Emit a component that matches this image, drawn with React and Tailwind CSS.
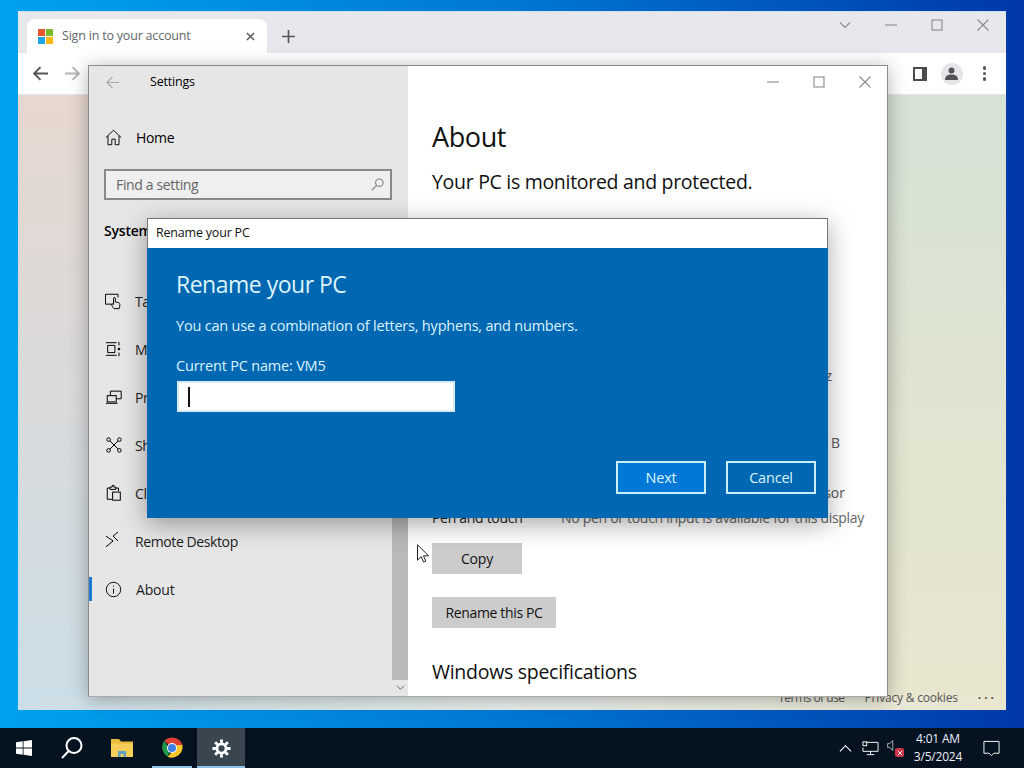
const Ic = ({ className = "", children, vb = "0 0 20 20" }) => (
  <svg viewBox={vb} fill="none" stroke="currentColor" strokeWidth="1.100" className={"shrink-0 " + className}>{children}</svg>
);

const NAV = [
  ["Tablet", <><path d="M8 13.500H.5V2.500H14.500V6" /><path d="M10 18.500C8.500 17 7.500 15 7.500 14c0-1 1.200-1 2-.2V7c0-1.400 2-1.400 2 0v4l3.500.8c1.200.3 1.500 1 1.500 2.200 0 1.500-.3 3-.8 4.500z" /></>],
  ["Multitasking", <><path d="M1 3h12M1 17h12M3 6h8v8H3z" /><path d="M15.500 2v4M15.500 14v4" /><circle cx="15.500" cy="10" r="1" fill="currentColor" /></>],
  ["Projecting to this PC", <><path d="M6 8V3.500h12V12h-5" /><rect x="2.500" y="8.500" width="10" height="7" /><path d="M1 17h13" /></>],
  ["Shared experiences", <><circle cx="4" cy="4" r="2" /><circle cx="16" cy="4" r="2" /><circle cx="4" cy="16" r="2" /><circle cx="16" cy="16" r="2" /><path d="M5.500 5.500l9 9M14.500 5.500l-9 9" /></>],
  ["Clipboard", <><path d="M8 17H2.500V4.500h3M12 4.500h3V8" /><path d="M5.500 6V3.500h2.500V1.500h2V3.500h2V6z" /><rect x="8.500" y="9" width="8.500" height="9" /></>],
  ["Remote Desktop", <><path d="M1 4.500l8 5.500-8 6.500M14.500 0L9 4.500l5.500 5.500" /></>],
];

function Controls({ chevron }) {
  return (
    <div className="flex items-center gap-[34px] text-[#8a8a8a]">
      {chevron && <Ic className="w-3 h-3" vb="0 0 12 12"><path d="M1 3.500l5 5 5-5" /></Ic>}
      <Ic className="w-3 h-3" vb="0 0 12 12"><path d="M0 6h12" /></Ic>
      <Ic className="w-3 h-3" vb="0 0 12 12"><rect x="1" y="1" width="10" height="10" /></Ic>
      <Ic className="w-3 h-3" vb="0 0 12 12"><path d="M.5.500l11 11M11.500.500l-11 11" /></Ic>
    </div>
  );
}

function Browser() {
  return (
    <div className="absolute left-[18px] top-[11px] w-[988px] h-[699px] flex flex-col bg-[#e7e8ec] border-t border-[#cfe0f0]">
      <div className="h-[41px] flex items-end pl-[9px] pr-[17px] relative shrink-0">
        <div className="w-[240px] h-[34px] bg-white rounded-t-lg flex items-center pl-[11px] pr-[12px]">
          <svg viewBox="0 0 16 16" className="w-[15px] h-[15px] shrink-0">
            <rect width="7.500" height="7.500" fill="#e8582a" />
            <rect x="8.500" width="7.500" height="7.500" fill="#7cb82a" />
            <rect y="8.500" width="7.500" height="7.500" fill="#1ea5e8" />
            <rect x="8.500" y="8.500" width="7.500" height="7.500" fill="#fcb812" />
          </svg>
          <span className="ml-[9px] text-[12.500px] text-[#62666a] tracking-[-0.2px] flex-1 truncate">Sign in to your account</span>
          <Ic className="w-[9px] h-[9px] text-[#555]" vb="0 0 10 10"><path strokeWidth="1.600" d="M1 1l8 8M9 1l-8 8" /></Ic>
        </div>
        <Ic className="w-[13px] h-[13px] ml-[15px] mb-[10px] text-[#555]" vb="0 0 12 12"><path strokeWidth="1.500" d="M6 0v12M0 6h12" /></Ic>
        <div className="ml-auto self-start mt-[7px]"><Controls chevron /></div>
      </div>
      <div className="h-[42px] bg-white flex items-center pl-[15px] pr-[15px] shrink-0 border-b border-[#e4e4e4]">
        <Ic className="w-[15px] h-[15px] text-[#555]" vb="0 0 14 14"><path strokeWidth="1.800" d="M14 7H1.500M7 1L1 7l6 6" /></Ic>
        <Ic className="w-[15px] h-[15px] ml-[17px] text-[#b4b4b4]" vb="0 0 14 14"><path strokeWidth="1.800" d="M0 7h12.500M7 1l6 6-6 6" /></Ic>
        <div className="ml-auto flex items-center">
          <div className="w-[14px] h-[14px] border-2 border-r-[5px] border-[#4c4c4c] bg-white" />
          <div className="w-[22px] h-[22px] ml-[14px] rounded-full bg-[#e3e5e8] flex items-center justify-center">
            <svg viewBox="0 0 12 12" className="w-[13px] h-[13px]" fill="#50545a"><circle cx="6" cy="3.200" r="2.700" /><path d="M0 12c0-3.500 2.500-5 6-5s6 1.500 6 5z" /></svg>
          </div>
          <div className="ml-[20px] mr-[5px] flex flex-col gap-[2px]">
            <div className="w-[3.500px] h-[3.500px] rounded-full bg-[#555]" />
            <div className="w-[3.500px] h-[3.500px] rounded-full bg-[#555]" />
            <div className="w-[3.500px] h-[3.500px] rounded-full bg-[#555]" />
          </div>
        </div>
      </div>
      <div className="flex-1 relative flex flex-col">
        <div className="flex-1 flex">
          <div className="w-1/2 bg-linear-to-b from-[#e6d7cf] to-[#cbdde6]" />
          <div className="w-1/2 bg-linear-to-b from-[#d5e2d5] via-[#dfe4d0] to-[#e9e6cf]" />
        </div>
        <div className="h-[13px] shrink-0 bg-linear-to-r from-[#cbdde6] via-[#e8efec] to-[#e9e6cf]" />
        <div className="absolute right-[9px] bottom-[3px] flex items-center text-[12px] text-[#555] tracking-[-0.2px]">
          <span className="tracking-[-0.5px]">Terms of use</span>
          <span className="ml-[20px]">Privacy &amp; cookies</span>
          <span className="ml-[20px] tracking-[3px] font-bold">···</span>
        </div>
      </div>
    </div>
  );
}

function Settings() {
  return (
    <div className="absolute left-[88px] top-[65px] w-[800px] h-[632px] flex border border-[#8c8c8c] border-b-[#aaa] bg-white shadow-[0_2px_18px_rgba(0,0,0,0.3)] overflow-hidden text-black">
      <div className="w-[319px] shrink-0 bg-[#e6e6e6] relative flex flex-col">
        <div className="h-[33px] shrink-0 flex items-center pl-[17px]">
          <Ic className="w-[13px] h-[13px] text-[#aaa]" vb="0 0 14 14"><path strokeWidth="1.300" d="M14 7H1M7 1L1 7l6 6" /></Ic>
          <span className="ml-[31px] text-[12.500px] tracking-[-0.2px]">Settings</span>
        </div>
        <div className="mt-[14px] h-12 shrink-0 flex items-center pl-[16px]">
          <Ic className="w-[17px] h-[17px]" vb="0 0 20 20"><path d="M1 10l9-8.500 9 8.500M3.500 8v10.500h4.500V12h4v6.500h4.500V8" /></Ic>
          <span className="ml-[14px] text-[14px] tracking-[-0.35px]">Home</span>
        </div>
        <div className="mt-2 mx-[15px] w-[288px] h-[31px] shrink-0 border-2 border-[#8a8a8a] bg-[#efefef] flex items-center pl-[10px] pr-[6px]">
          <span className="text-[14px] text-[#666] flex-1 tracking-[-0.35px]">Find a setting</span>
          <Ic className="w-[13px] h-[13px] text-[#777]" vb="0 0 14 14"><circle cx="9" cy="5" r="4" /><path d="M6 8l-5 5" /></Ic>
        </div>
        <div className="mt-[20px] ml-[15px] h-[22px] shrink-0 text-[14px] font-semibold leading-[22px] tracking-[-0.2px]">System</div>
        <div className="mt-[35px] flex flex-col">
          {NAV.map(([label, icon]) => (
            <div key={label} className="h-12 flex items-center pl-[16px]">
              <Ic className="w-[18px] h-[18px]">{icon}</Ic>
              <span className="ml-[12px] text-[14px] text-[#1c1c1c] tracking-[-0.4px]">{label}</span>
            </div>
          ))}
          <div className="h-12 flex items-center pl-[16px] relative">
            <div className="absolute left-0 top-[12px] w-[3px] h-[24px] bg-[#1e7ad0]" />
            <Ic className="w-[17px] h-[17px]"><circle cx="10" cy="10" r="8.500" /><path d="M10 9v6M10 5.500v1.200" /></Ic>
            <span className="ml-[14px] text-[14px] text-[#1c1c1c] tracking-[-0.2px]">About</span>
          </div>
        </div>
        <div className="absolute right-0 top-[165px] bottom-[16px] w-4 bg-[#b9b9b9]" />
        <div className="absolute right-[3px] bottom-[4px] text-[#666]">
          <Ic className="w-[9px] h-[9px]" vb="0 0 10 10"><path d="M1 3l4 4 4-4" /></Ic>
        </div>
      </div>
      <div className="flex-1 min-w-0 flex flex-col">
        <div className="h-[31px] shrink-0 flex items-center justify-end pr-[16px]"><Controls /></div>
        <div className="pl-[24px] flex flex-col items-start">
          <div className="mt-[20px] h-10 text-[27px] leading-10 tracking-[-0.4px] text-[#111]">About</div>
          <div className="mt-[11px] h-7 text-[19.500px] leading-7 tracking-[-0.3px] text-[#111]">Your PC is monitored and protected.</div>
          <div className="mt-[170px] h-5 w-[400px] text-right text-[14px] leading-5 text-[#555]">z</div>
          <div className="mt-[47px] h-5 w-[408px] text-right text-[14px] leading-5 text-[#555]">B</div>
          <div className="mt-[30px] h-5 w-[413px] text-right text-[14px] leading-5 text-[#555]">sor</div>
          <div className="mt-[5px] h-5 flex text-[14px] leading-5 tracking-[-0.3px]">
            <span className="w-[129px] text-[#222]">Pen and touch</span>
            <span className="text-[#666]">No pen or touch input is available for this display</span>
          </div>
          <button className="mt-[15px] w-[90px] h-[31px] bg-[#cccccc] text-[14px] text-[#111] tracking-[-0.2px]">Copy</button>
          <button className="mt-[23px] w-[124px] h-[31px] bg-[#cccccc] text-[14px] text-[#111] tracking-[-0.35px]">Rename this PC</button>
          <div className="mt-[28px] h-8 text-[19.500px] leading-8 tracking-[-0.28px] text-[#111]">Windows specifications</div>
        </div>
      </div>
    </div>
  );
}

function Dialog() {
  return (
    <div className="absolute left-[147px] top-[218px] w-[681px] h-[300px] flex flex-col shadow-[0_6px_24px_rgba(0,0,0,0.35)]">
      <div className="h-[30px] shrink-0 bg-white border border-b-0 border-[#777] flex items-center pl-[8px] text-[12.500px] tracking-[-0.2px] text-[#111]">Rename your PC</div>
      <div className="flex-1 bg-[#0067b3] pl-[29px] pr-[12px] flex flex-col text-[#dcf4fb]">
        <div className="mt-[20px] h-8 text-[23px] leading-8 tracking-[-0.5px]">Rename your PC</div>
        <div className="mt-[14px] h-6 text-[14.500px] leading-6 tracking-[-0.2px]">You can use a combination of letters, hyphens, and numbers.</div>
        <div className="mt-4 h-6 text-[14.500px] leading-6 tracking-[-0.2px]">Current PC name: VM5</div>
        <div className="mt-[3px] ml-px w-[278px] h-[31px] bg-white border-2 border-[#d8ebf5] flex items-center pl-[9px]">
          <div className="w-[1.500px] h-5 bg-[#111]" />
        </div>
        <div className="mt-[49px] flex justify-end gap-5">
          <button className="w-[90px] h-[33px] bg-[#0078d7] border-2 border-[#c8f0f8] text-[14.500px] tracking-[-0.2px]">Next</button>
          <button className="w-[90px] h-[33px] border-2 border-[#c8f0f8] text-[14.500px] tracking-[-0.2px]">Cancel</button>
        </div>
      </div>
    </div>
  );
}

function Cursor() {
  return (
    <svg viewBox="0 0 12 19" className="absolute left-[417px] top-[544px] w-3 h-[19px]">
      <path d="M.5.700v15.500l3.700-3.500 2.400 5.400 2.200-1-2.300-5.300h5z" fill="#fff" stroke="#222" strokeWidth="1" />
    </svg>
  );
}

function Taskbar() {
  return (
    <div className="h-10 shrink-0 bg-[#04131f] flex items-stretch text-white relative z-10">
      <div className="w-12 flex items-center justify-center">
        <svg viewBox="0 0 16 16" className="w-4 h-4" fill="#fff">
          <path d="M0 2.300l6.700-1v6.200H0zM7.500 1.200L16 0v7.500H7.500zM0 8.500h6.700v6.200l-6.700-1zM7.500 8.500H16V16l-8.500-1.200z" />
        </svg>
      </div>
      <div className="w-12 flex items-center justify-center">
        <svg viewBox="0 0 24 24" className="w-[24px] h-[24px]" fill="none" stroke="#fff" strokeWidth="2">
          <circle cx="14" cy="9.500" r="7.500" /><path d="M8.700 15L2 22" />
        </svg>
      </div>
      <div className="w-[51px] flex items-center justify-center">
        <svg viewBox="0 0 24 20" className="w-6 h-5">
          <path d="M1 1h8l2 2.500h12V8H1z" fill="#e8b93c" />
          <path d="M1 5.500h22V19H1z" fill="#f5cf5a" />
          <path d="M8 19v-6h8v6h-2.500v-3h-3v3z" fill="#5f9fc8" />
        </svg>
      </div>
      <div className="w-[50px] flex items-center justify-center relative">
        <svg viewBox="0 0 48 48" className="w-6 h-6">
          <path d="M24 24L8.500 9.500A22 22 0 0 1 45 18H24z" fill="#dd4033" />
          <path d="M24 24l-9 17A22 22 0 0 1 8.500 9.500L20 28z" fill="#1f9a4d" />
          <path d="M24 18h21a22 22 0 0 1-30 23.500L28 28z" fill="#fbc62c" />
          <circle cx="24" cy="24" r="10" fill="#fff" />
          <circle cx="24" cy="24" r="8" fill="#3d7fe4" />
        </svg>
        <div className="absolute bottom-0 left-[5px] right-[5px] h-[2px] bg-[#8cc4e8]" />
      </div>
      <div className="w-12 bg-[#39464f] flex items-center justify-center relative">
        <svg viewBox="0 0 20 20" className="w-[19px] h-[19px]" fill="none" stroke="#fff">
          <circle cx="10" cy="10" r="4.800" strokeWidth="3" />
          <path d="M10 .500v3.500M10 16v3.500M.500 10H4M16 10h3.500M3.300 3.300l2.500 2.500M14.200 14.200l2.500 2.500M16.700 3.300l-2.500 2.500M5.800 14.200l-2.500 2.500" strokeWidth="3" />
        </svg>
        <div className="absolute bottom-0 inset-x-0 h-[2px] bg-[#8cc4e8]" />
      </div>
      <div className="ml-auto flex items-center">
        <Ic className="w-[13px] h-[13px]" vb="0 0 14 14"><path strokeWidth="1.200" d="M1 10l6-6 6 6" /></Ic>
        <svg viewBox="0 0 18 18" className="w-[17px] h-[17px] ml-[10px]" fill="none" stroke="#fff">
          <path d="M4 2.500h13v9.500H1V8" /><path d="M9 12v3M5 15.500h8" /><rect x="1" y="2" width="4" height="4" />
        </svg>
        <div className="relative ml-2 w-[18px] h-[18px]">
          <svg viewBox="0 0 14 18" className="absolute left-0 top-0 w-[9px] h-[13px]" fill="none" stroke="#fff"><path d="M1 6h3l5-4.500v15L4 12H1z" /></svg>
          <div className="absolute right-[1px] bottom-0 w-[9px] h-[9px] bg-[#d0344a] rounded-[2px] flex items-center justify-center">
            <svg viewBox="0 0 8 8" className="w-[6px] h-[6px]" stroke="#fff" strokeWidth="1.200"><path d="M1 1l6 6M7 1L1 7" /></svg>
          </div>
        </div>
        <div className="ml-px w-[64px] flex flex-col items-center text-[12px] leading-[18px] tracking-[-0.2px] text-[#eef]">
          <span>4:01 AM</span>
          <span>3/5/2024</span>
        </div>
        <svg viewBox="0 0 18 18" className="w-[17px] h-[17px] ml-[13px] mr-[24px]" fill="none" stroke="#fff"><path d="M1 1.500h16v12.500h-5.500L9 16.500 6.500 14H1z" /></svg>
      </div>
    </div>
  );
}

export default function App() {
  return (
    <div className="w-[1024px] h-[768px] overflow-hidden flex flex-col font-['Open_Sans','Noto_Sans',sans-serif]">
      <div className="flex-1 relative bg-linear-to-r from-[#00a2ee] via-[#0078d4] to-[#0038a8]">
        <Browser />
        <Settings />
        <Dialog />
        <Cursor />
      </div>
      <Taskbar />
    </div>
  );
}
